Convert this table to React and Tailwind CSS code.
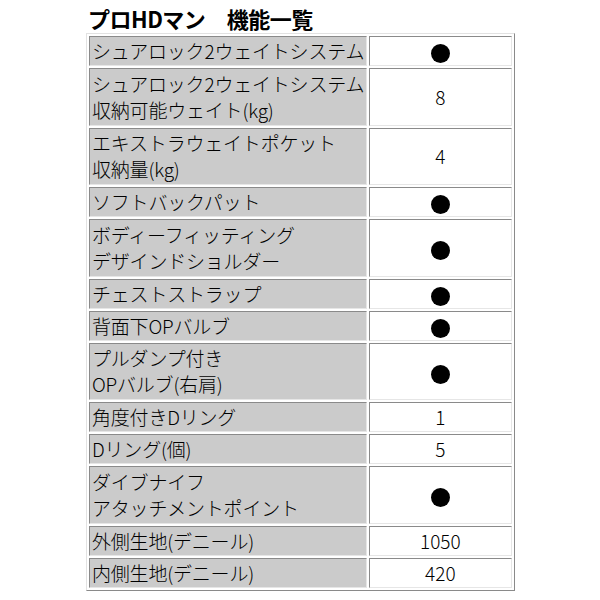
import React from "react";

const rows = [
  { label: ["シュアロック2ウェイトシステム"], value: "dot" },
  { label: ["シュアロック2ウェイトシステム", "収納可能ウェイト(kg)"], value: "8" },
  { label: ["エキストラウェイトポケット", "収納量(kg)"], value: "4" },
  { label: ["ソフトバックパット"], value: "dot" },
  { label: ["ボディーフィッティング", "デザインドショルダー"], value: "dot" },
  { label: ["チェストストラップ"], value: "dot" },
  { label: ["背面下OPバルブ"], value: "dot" },
  { label: ["プルダンプ付き", "OPバルブ(右肩)"], value: "dot" },
  { label: ["角度付きDリング"], value: "1" },
  { label: ["Dリング(個)"], value: "5" },
  { label: ["ダイブナイフ", "アタッチメントポイント"], value: "dot" },
  { label: ["外側生地(デニール)"], value: "1050" },
  { label: ["内側生地(デニール)"], value: "420" },
];

export default function App() {
  return (
    <div
      className="w-[600px] h-[600px] bg-white text-black"
      style={{ fontFamily: '"Noto Sans CJK JP", "Noto Sans", sans-serif' }}
    >
      <div className="w-[429px] ml-[86px] pt-[4px]">
        <h1 className="pl-[2px] text-[22px] leading-[28px] font-bold tracking-[-0.5px] whitespace-nowrap">
          プロHDマン　機能一覧
        </h1>
        <table className="mt-[1px] w-[429px] border-separate border-spacing-[2px] border border-t-[#e2e2e2] border-l-[#e2e2e2] border-r-[#8a8a8a] border-b-[#8a8a8a]">
          <tbody>
            {rows.map((row, i) => {
              const tall = row.label.length > 1;
              return (
                <tr key={i}>
                  <td
                    className={`w-[277px] ${
                      tall ? "h-[57.5px]" : "h-[30px]"
                    } bg-[#cbcbcb] border border-t-[#8a8a8a] border-l-[#8a8a8a] border-r-[#e6e6e6] border-b-[#e6e6e6] pl-[2px] py-0 align-middle text-[19px] leading-[26px] font-light whitespace-nowrap tracking-[-0.2px]`}
                  >
                    {row.label.map((line, j) => (
                      <div key={j}>{line}</div>
                    ))}
                  </td>
                  <td
                    className={`w-[143px] ${
                      tall ? "h-[57.5px]" : "h-[30px]"
                    } bg-white border border-t-[#8a8a8a] border-l-[#8a8a8a] border-r-[#e6e6e6] border-b-[#e6e6e6] p-0 align-middle text-center text-[19px] leading-[26px] font-light`}
                  >
                    {row.value === "dot" ? (
                      <span className="inline-block w-[19px] h-[19px] rounded-full bg-black align-middle" />
                    ) : (
                      row.value
                    )}
                  </td>
                </tr>
              );
            })}
          </tbody>
        </table>
      </div>
    </div>
  );
}
